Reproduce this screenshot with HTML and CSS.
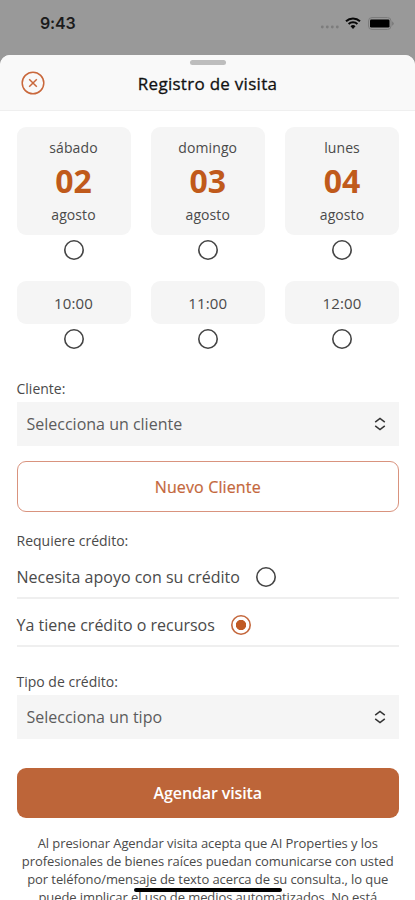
FILE: index.html
```html
<!DOCTYPE html>
<html lang="es">
<head>
<meta charset="utf-8">
<meta name="viewport" content="width=device-width, initial-scale=1">
<title>Registro de visita</title>
<link rel="stylesheet" href="styles.css">
</head>
<body>
<div class="phone">
  <div class="status">
    <span class="clock">9:43</span>
    <div class="indicators">
      <svg class="signal" width="20" height="4" viewBox="0 0 20 4"><g fill="#7c7c7c"><circle cx="2.3" cy="2" r="1.4"/><circle cx="7.3" cy="2" r="1.4"/><circle cx="12.3" cy="2" r="1.4"/><circle cx="17.3" cy="2" r="1.4"/></g></svg>
      <svg class="wifi" width="16" height="12" viewBox="0 0 16 12"><g fill="none" stroke="#080808" stroke-width="2"><path d="M1 4.2a10.2 10.2 0 0 1 14 0"/><path d="M3.6 7a6.4 6.4 0 0 1 8.8 0"/></g><path d="M5.5 9.3a3.6 3.6 0 0 1 5 0L8 12z" fill="#080808"/></svg>
      <svg class="battery" width="27" height="13" viewBox="0 0 27 13"><rect x=".5" y=".5" width="22.5" height="12" rx="3.5" fill="none" stroke="#7c7c7c"/><rect x="2" y="2.5" width="19.5" height="8" rx="1.3" fill="#000"/><path d="M24.2 4.2q3 2.3 0 4.6z" fill="#777"/></svg>
    </div>
  </div>
  <main class="sheet">
    <header class="head">
      <div class="handle"></div>
      <div class="titlebar">
        <svg class="close" width="24" height="24" viewBox="0 0 24 24" fill="none" stroke="#c9683c" stroke-width="1.5"><circle cx="12" cy="12" r="10.8"/><path d="M8.2 8.2l7.6 7.6M15.8 8.2l-7.6 7.6"/></svg>
        <h1 class="title">Registro de visita</h1>
      </div>
    </header>
    <div class="content">
      <div class="grid">
        <div class="option"><div class="card day"><span class="name">sábado</span><b class="num">02</b><span class="name">agosto</span></div><i class="radio"></i></div>
        <div class="option"><div class="card day"><span class="name">domingo</span><b class="num">03</b><span class="name">agosto</span></div><i class="radio"></i></div>
        <div class="option"><div class="card day"><span class="name">lunes</span><b class="num">04</b><span class="name">agosto</span></div><i class="radio"></i></div>
      </div>
      <div class="grid times">
        <div class="option"><div class="card hour">10:00</div><i class="radio"></i></div>
        <div class="option"><div class="card hour">11:00</div><i class="radio"></i></div>
        <div class="option"><div class="card hour">12:00</div><i class="radio"></i></div>
      </div>
      <div class="label client-label">Cliente:</div>
      <div class="select"><span>Selecciona un cliente</span><svg width="12" height="14" viewBox="0 0 12 14" fill="none" stroke="#333" stroke-width="1.5"><path d="M1.2 5.2L6 1.4l4.8 3.8M1.2 8.8L6 12.6l4.8-3.8"/></svg></div>
      <div class="button outline">Nuevo Cliente</div>
      <div class="label credit-label">Requiere crédito:</div>
      <div class="choice"><span>Necesita apoyo con su crédito</span><i class="radio"></i></div>
      <div class="choice"><span>Ya tiene crédito o recursos</span><i class="radio on"></i></div>
      <div class="label type-label">Tipo de crédito:</div>
      <div class="select"><span>Selecciona un tipo</span><svg width="12" height="14" viewBox="0 0 12 14" fill="none" stroke="#333" stroke-width="1.5"><path d="M1.2 5.2L6 1.4l4.8 3.8M1.2 8.8L6 12.6l4.8-3.8"/></svg></div>
      <div class="button solid">Agendar visita</div>
      <p class="terms">Al presionar Agendar visita acepta que AI Properties y los<br>profesionales de bienes raíces puedan comunicarse con usted<br>por teléfono/mensaje de texto acerca de su consulta., lo que<br>puede implicar el uso de medios automatizados. No está</p>
    </div>
  </main>
  <div class="home"></div>
</div>
</body>
</html>
```
FILE: styles.css
```css
* { box-sizing: border-box; }
body { margin: 0; font-family: "Open Sans", "Noto Sans", sans-serif; color: #4a4a4a; }
.phone { position: relative; width: 415px; height: 900px; overflow: hidden; background: #999; }
.status { height: 55px; padding: 13px 22px 0 40px; display: flex; justify-content: space-between; align-items: flex-start; }
.clock { font: 600 16px/20px Inter, sans-serif; color: #1c1c1c; letter-spacing: -.2px; }
.indicators { display: flex; align-items: center; height: 20px; }
.signal { margin: 8px 5px 0 0; }
.wifi { margin-right: 7px; }
.battery { margin-right: -2px; }
.sheet { height: 845px; background: #fff; border-radius: 10px 10px 0 0; overflow: hidden; }
.head { height: 56px; background: #f9f9f9; border-bottom: 1px solid #efefef; padding-top: 5px; }
.handle { width: 36px; height: 5px; border-radius: 3px; background: #bdbdbd; margin: 0 auto; }
.titlebar { display: grid; grid-template-columns: 24px 1fr 24px; align-items: center; padding: 0 21px; height: 36px; }
.title { margin: 2px 0 0; text-align: center; font-size: 17px; line-height: 24px; font-weight: 500; letter-spacing: .28px; color: #111; -webkit-text-stroke: .3px #111; }
.content { padding: 16px 16px 0 16.5px; }
.grid { display: grid; grid-template-columns: repeat(3, 114px); justify-content: space-between; }
.option { display: flex; flex-direction: column; align-items: center; }
.card { width: 100%; background: #f5f5f5; border-radius: 9px; text-align: center; }
.day { height: 108px; padding-top: 10px; display: flex; flex-direction: column; }
.name { font-size: 14px; line-height: 22px; letter-spacing: .1px; }
.num { font-size: 32px; line-height: 43px; padding-bottom: 2px; color: #c05a1b; }
.radio { display: block; flex: none; width: 20px; height: 20px; box-shadow: inset 0 0 0 1.6px #444; border-radius: 50%; }
.option .radio { margin-top: 5px; }
.times { margin-top: 21px; }
.hour { height: 43px; line-height: 45px; font-size: 15px; letter-spacing: .2px; }
.label { font-size: 14px; line-height: 20px; }
.client-label { margin-top: 30px; margin-bottom: 3px; }
.select { height: 44px; background: #f5f5f5; padding: 0 13px 0 10px; display: flex; justify-content: space-between; align-items: center; font-size: 16px; color: #5c5c5c; }
.button { height: 50px; border-radius: 9px; display: flex; align-items: center; justify-content: center; font-size: 16px; }
.outline { margin-top: 15px; height: 51px; border: 1px solid #d9937e; color: #c4673c; letter-spacing: .14px; -webkit-text-stroke: .2px #c4673c; }
.credit-label { margin-top: 19px; }
.choice { height: 48px; border-bottom: 2px solid #efefef; display: flex; align-items: center; gap: 16px; font-size: 16px; padding-top: 5px; }
.radio.on { box-shadow: inset 0 0 0 1.6px #c4673c; background: radial-gradient(circle, #c05a24 0 4.8px, transparent 5.5px); }
.type-label { margin-top: 25px; margin-bottom: 3px; }
.solid { margin-top: 29px; background: #bd6539; color: #fff; font-weight: 600; letter-spacing: -.12px; }
.terms { margin: 16px -10px 0; text-align: center; font-size: 13px; line-height: 18px; letter-spacing: -.08px; }
.home { position: absolute; left: 134px; top: 888px; width: 148px; height: 4px; border-radius: 2px; background: #000; }
```
